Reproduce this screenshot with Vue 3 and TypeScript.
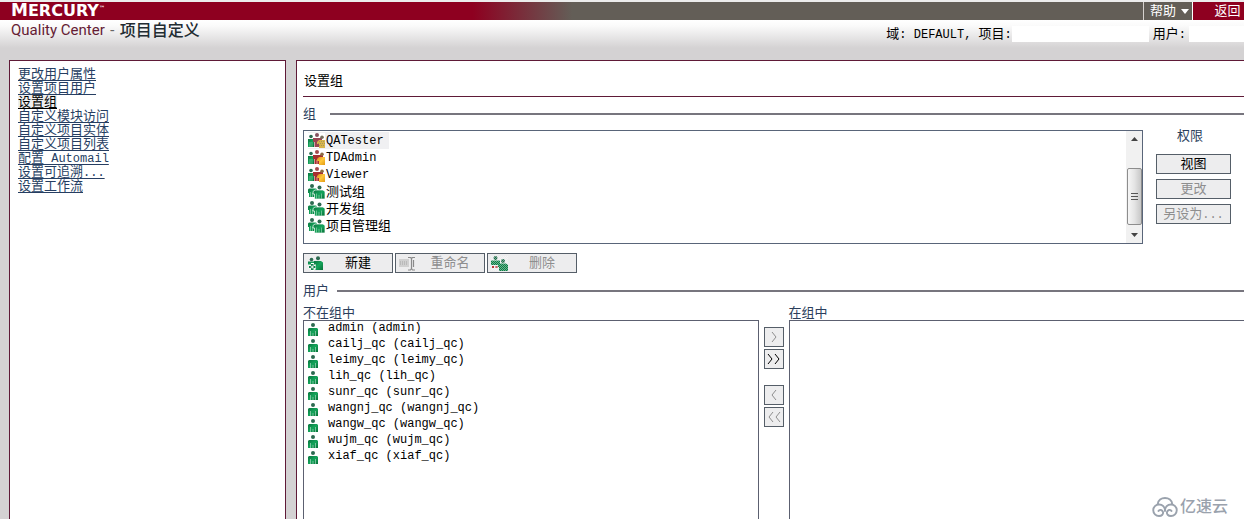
<script setup lang="ts">
import { ref } from 'vue'

interface Run { text: string; latin?: boolean }
interface NavItem { runs: Run[]; active?: boolean }
interface Group { name: string; icon: string; latin?: boolean; selected?: boolean }

const nav: NavItem[] = [
  { runs: [{ text: '更改用户属性' }] },
  { runs: [{ text: '设置项目用户' }] },
  { runs: [{ text: '设置组' }], active: true },
  { runs: [{ text: '自定义模块访问' }] },
  { runs: [{ text: '自定义项目实体' }] },
  { runs: [{ text: '自定义项目列表' }] },
  { runs: [{ text: '配置' }, { text: ' Automail', latin: true }] },
  { runs: [{ text: '设置可追溯' }, { text: '...', latin: true }] },
  { runs: [{ text: '设置工作流' }] },
]

const groups = ref<Group[]>([
  { name: 'QATester', icon: 'locked', latin: true, selected: true },
  { name: 'TDAdmin', icon: 'system', latin: true },
  { name: 'Viewer', icon: 'system', latin: true },
  { name: '测试组', icon: 'custom' },
  { name: '开发组', icon: 'custom' },
  { name: '项目管理组', icon: 'custom' },
])

const users = ['admin', 'cailj_qc', 'leimy_qc', 'lih_qc', 'sunr_qc', 'wangnj_qc', 'wangw_qc', 'wujm_qc', 'xiaf_qc']

function select(group: Group) {
  groups.value.forEach((g) => { g.selected = g === group })
}
</script>

<template>
  <div class="page">
    <svg class="defs" width="0" height="0" aria-hidden="true">
      <defs>
        <linearGradient id="green" x1="0" y1="0" x2="1" y2="1">
          <stop offset="0" stop-color="#0b7440" /><stop offset="0.5" stop-color="#14a45a" /><stop offset="1" stop-color="#087038" />
        </linearGradient>
        <linearGradient id="gold" x1="0" y1="0" x2="1" y2="1">
          <stop offset="0" stop-color="#d98a1c" /><stop offset="0.5" stop-color="#ffc83c" /><stop offset="1" stop-color="#e39a14" />
        </linearGradient>
        <pattern id="dither" width="2" height="2" patternUnits="userSpaceOnUse">
          <rect width="1" height="1" fill="#fff" /><rect x="1" y="1" width="1" height="1" fill="#fff" />
        </pattern>
      </defs>
      <symbol id="person" viewBox="0 0 12 14">
        <circle cx="6" cy="2" r="2" fill="#2c6a50" />
        <path d="M2 5h8l1 1v7H1V6z" fill="url(#green)" />
        <path d="M3.500 8v5M6 10v3M8.500 8v5" stroke="#8fd0ae" stroke-width=".8" />
      </symbol>
      <symbol id="custom" viewBox="0 0 17 15">
        <circle cx="4" cy="2" r="2" fill="#2c6a50" />
        <path d="M1 4.500h7l1 1V9H8v4H1V9H0V5.500z" fill="url(#green)" />
        <path d="M2.500 8v5M4.500 9v4" stroke="#8fd0ae" stroke-width=".7" />
        <path d="M7 6h8l2 1.500V15H6.500v-5H5V7.500z" fill="url(#green)" stroke="#fff" stroke-width=".7" />
        <circle cx="11.500" cy="3.500" r="2" fill="#2c6a50" />
        <path d="M8.500 9.500V15M11 11v4M13.500 9.500V15" stroke="#8fd0ae" stroke-width=".7" />
      </symbol>
      <symbol id="system" viewBox="0 0 17 15">
        <circle cx="3" cy="3.500" r="1.800" fill="#2c6a50" />
        <path d="M0 6h6v8H0z" fill="url(#green)" />
        <path d="M2 9v5M4 9v5" stroke="#8fd0ae" stroke-width=".6" />
        <path d="M5 5h10v4h-3v5H6.500V9H5z" fill="#a52f30" />
        <circle cx="9" cy="2" r="2" fill="#a34a4c" />
        <path d="M9 10v4" stroke="#edb5a8" stroke-width=".8" />
        <circle cx="14" cy="4.300" r="1.800" fill="#8d6b42" />
        <path d="M11 7h6v8h-6v-4H9V9z" fill="url(#gold)" />
      </symbol>
      <symbol id="locked" viewBox="0 0 17 15">
        <circle cx="3" cy="3.500" r="1.800" fill="#2c6a50" />
        <path d="M0 6h6v8H0z" fill="url(#green)" />
        <path d="M2 9v5M4 9v5" stroke="#8fd0ae" stroke-width=".6" />
        <path d="M5 5h9v4h-3v5H6.500V9H5z" fill="#9a4653" />
        <circle cx="9" cy="2" r="2" fill="#85525f" />
        <circle cx="14" cy="4.300" r="1.800" fill="#777160" />
        <path d="M11 7h6v8h-6v-4H9V9z" fill="#d8b54a" />
        <path d="M11 8.500h6M10 10.500h7M11 12.500h6" stroke="#99905e" stroke-width=".8" stroke-dasharray="1 1" />
      </symbol>
      <symbol id="add" viewBox="0 0 17 15">
        <circle cx="4.500" cy="3.500" r="1.800" fill="#2c6a50" />
        <path d="M1 5.500h7v3H1z" fill="url(#green)" />
        <circle cx="11" cy="2.200" r="2" fill="#2c6a50" />
        <path d="M7 5h7l2 1.500V14H8.500V8H7z" fill="url(#green)" />
        <path d="M4 7h3v2.500h2v3H7V15H4v-2.500H1.500v-3H4z" fill="#fff" />
        <path d="M4 8h2.500v2h2v2h-2v2H4v-2H2v-2h2z" fill="#12824b" />
        <path d="M4.700 9.500h1v1h1v1h-1v1h-1v-1h-1v-1h1z" fill="#fff" />
      </symbol>
      <symbol id="rename" viewBox="0 0 17 15">
        <path d="M0 3h10v8H0z" fill="#d0d0d0" />
        <path d="M1 6h8M1 8h8" stroke="#a4a4a4" stroke-dasharray="1 1" />
        <path d="M9 1.500h2.500l1 1 1-1H16M12.500 2.500v10M9 14h2.500l1-1.500 1 1.500H16M14.500 4v7" fill="none" stroke="#8a8a8a" stroke-width="1.200" />
      </symbol>
      <symbol id="remove" viewBox="0 0 17 15">
        <circle cx="4.500" cy="2" r="2" fill="#1d6b48" />
        <path d="M0 4.500h9V9H0z" fill="#0b7e45" />
        <circle cx="12" cy="5" r="2" fill="#1d6b48" />
        <path d="M7 7.500h8l2 1.500v6H8v-4H7z" fill="#0b7e45" />
        <path d="M0 0h17v15H0z" fill="url(#dither)" opacity=".4" />
        <path d="M1 10l2 2M3 10l-2 2M4.500 10l2 2M6.500 10l-2 2" stroke="#b73a3a" />
      </symbol>
    </svg>

    <header>
      <div class="bar">
        <div class="brand"><span class="initial">M</span>ERCURY<span class="tm">™</span></div>
        <button class="help" type="button">帮助<svg width="8" height="5" viewBox="0 0 8 5" aria-hidden="true"><path d="M0 0h8L4 5z" fill="#fff" /></svg></button>
        <button class="back" type="button">返回</button>
      </div>
      <div class="sub">
        <h1><span class="product">Quality Center</span><span class="dash">-</span><span class="section">项目自定义</span></h1>
        <div class="context">
          <span>域<i>: DEFAULT, </i>项目<i>:</i></span><span class="blank project"></span>
          <span>用户<i>:</i></span><span class="blank user"></span>
        </div>
      </div>
    </header>

    <div class="body">
      <nav>
        <a v-for="(item, n) in nav" :key="n" href="#" :class="{ active: item.active }"><span v-for="(run, r) in item.runs" :key="r" :class="{ latin: run.latin }">{{ run.text }}</span></a>
      </nav>

      <main>
        <h2>设置组</h2>
        <div class="legend">组</div>
        <div class="groups">
          <div class="listbox">
            <ul>
              <li v-for="g in groups" :key="g.name" :class="{ selected: g.selected, latin: g.latin }" @click="select(g)">
                <svg width="17" height="15" aria-hidden="true"><use :href="'#' + g.icon" /></svg><span>{{ g.name }}</span>
              </li>
            </ul>
            <div class="scroll" aria-hidden="true">
              <svg width="7" height="4" viewBox="0 0 7 4"><path d="M0 4h7L3.500 0z" fill="#444" /></svg>
              <div class="thumb"><b></b><b></b><b></b></div>
              <svg width="7" height="4" viewBox="0 0 7 4"><path d="M0 0h7L3.500 4z" fill="#444" /></svg>
            </div>
          </div>
          <div class="rights">
            <span class="caption">权限</span>
            <button type="button">视图</button>
            <button type="button" disabled>更改</button>
            <button type="button" disabled>另设为<i>...</i></button>
          </div>
        </div>
        <div class="actions">
          <button type="button"><svg width="17" height="15" aria-hidden="true"><use href="#add" /></svg><span>新建</span></button>
          <button type="button" disabled><svg width="17" height="15" aria-hidden="true"><use href="#rename" /></svg><span>重命名</span></button>
          <button type="button" disabled><svg width="17" height="15" aria-hidden="true"><use href="#remove" /></svg><span>删除</span></button>
        </div>
        <div class="legend users">用户</div>
        <div class="transfer">
          <section>
            <h3>不在组中</h3>
            <ul class="members">
              <li v-for="u in users" :key="u"><svg width="12" height="14" aria-hidden="true"><use href="#person" /></svg>{{ u }} ({{ u }})</li>
            </ul>
          </section>
          <div class="arrows">
            <button type="button" disabled aria-label="添加"><svg width="14" height="12" viewBox="0 0 14 12"><path d="M5 1l4 5-4 5" /></svg></button>
            <button type="button" aria-label="全部添加"><svg width="14" height="12" viewBox="0 0 14 12"><path d="M1 1l4 5-4 5M8 1l4 5-4 5" /></svg></button>
            <button class="apart" type="button" disabled aria-label="移除"><svg width="14" height="12" viewBox="0 0 14 12"><path d="M9 1L5 6l4 5" /></svg></button>
            <button type="button" disabled aria-label="全部移除"><svg width="14" height="12" viewBox="0 0 14 12"><path d="M6 1L2 6l4 5M13 1L9 6l4 5" /></svg></button>
          </div>
          <section>
            <h3>在组中</h3>
            <ul class="members"></ul>
          </section>
        </div>
      </main>
    </div>

    <div class="watermark">
      <svg width="26" height="20" viewBox="0 0 26 20" aria-hidden="true">
        <path d="M5.500 7.500C6 3 9.500 1 13 1s7 2 7.500 6.500M13 14C13 10 10.500 7.500 7 7.500a5.700 5.700 0 0 0 0 11.500C10 19 11.500 17 11 15s-3.500-3-4.500-1M13 14c0-4 2.500-6.500 6-6.500A5.700 5.700 0 0 1 19 19c-3 0-4.500-2-4-4s3.500-3 4.500-1" fill="none" stroke="#9aa2ad" stroke-width="1.900" stroke-linecap="round" />
      </svg>
      <span>亿速云</span>
    </div>
  </div>
</template>

<style>
body { margin: 0; }
</style>

<style scoped>
* { box-sizing: border-box; }
.page {
  position: relative;
  display: flex;
  flex-direction: column;
  height: 100vh;
  overflow: hidden;
  background: #d4d2d3;
  color: #000;
  font: 13px/14px "Liberation Sans", "Noto Sans CJK SC", sans-serif;
}
.defs { position: absolute; }
i, .latin { font-family: "Liberation Mono", "Noto Sans CJK SC", monospace; font-size: 12px; font-style: normal; }
i, nav .latin { white-space: pre; }
h1, h2, h3 { margin: 0; font-size: 13px; font-weight: 400; }
ul { margin: 0; padding: 0; list-style: none; }
button { margin: 0; padding: 0; font: inherit; color: inherit; }

.bar {
  display: flex;
  height: 20px;
  border-top: 2px solid #ececec;
  background: linear-gradient(90deg, #8e0020 38%, #635e57 46%);
  color: #fff;
}
.brand { flex: 1; padding-left: 11px; font: bold 16px/16px "DejaVu Sans", sans-serif; }
.brand .initial { font-size: 17px; }
.brand .tm { font-size: 6px; vertical-align: 6px; line-height: 6px; }
.bar button { border: 0; border-left: 1px solid #d6d2ce; background: #635e57; line-height: 18px; }
.bar .help { display: flex; align-items: center; gap: 5px; width: 49px; padding-left: 6px; }
.bar .back { width: 52px; padding-left: 18px; border-left: 1px solid #fff; background: #8e0020; }

.sub {
  display: flex;
  justify-content: space-between;
  height: 40px;
  background: linear-gradient(#fff 0, #fafafa 15%, #d4d2d3 70%);
}
h1 { display: flex; padding-left: 11px; line-height: 20px; }
.product { color: #651c34; font: 15px/20px Roboto, sans-serif; }
.dash { padding: 0 5px; color: #666; font-size: 15px; }
.section { color: #222c32; font-size: 16px; font-weight: 500; line-height: 21px; }
.context { display: flex; padding-top: 6px; line-height: 16px; white-space: pre; }
.blank { background: #fff; height: 16px; }
.project { width: 137px; margin-right: 4px; }
.user { width: 55px; margin-left: 3px; }

.body { display: flex; flex: 1; gap: 10px; min-height: 0; padding-left: 9px; }
nav, main { border: 1px solid #5f1a37; border-bottom: 0; background: #fff; }
nav { display: flex; flex-direction: column; align-items: flex-start; width: 277px; padding: 6px 8px; }
nav a { height: 14px; color: #263e62; text-decoration: underline; text-underline-offset: 2px; }
nav a.active { background: #eee; color: #000; }

main { display: flex; flex: 1; flex-direction: column; min-width: 0; padding-left: 6px; border-right: 0; }
h2 { height: 36px; padding: 13px 0 0 1px; border-bottom: 1px solid #5f1a37; }
.legend { display: flex; align-items: center; gap: 14px; height: 14px; margin: 10px 0 9px; color: #2b3e5c; }
.legend::after { content: ""; flex: 1; height: 2px; background: #77757e; }
.legend.users { gap: 8px; margin: 11px 0 8px; }

.groups { display: flex; gap: 13px; padding-right: 13px; }
.listbox { display: flex; flex: 1; height: 114px; border: 1px solid #596579; }
.listbox ul { flex: 1; padding: 1px 0 0 4px; }
.listbox li { display: flex; align-items: center; gap: 1px; width: fit-content; height: 17px; padding-right: 5px; }
.listbox li svg { background: #fff; }
.listbox li.selected { background: #f0f0f2; }
.scroll { display: flex; flex-direction: column; align-items: center; width: 16px; padding: 6px 0; background: #f1f1f1; }
.thumb {
  display: flex;
  flex-direction: column;
  align-items: center;
  justify-content: center;
  gap: 2px;
  width: 15px;
  height: 57px;
  margin: auto 0 8px;
  border: 1px solid #8d8d8d;
  border-radius: 2px;
  background: linear-gradient(90deg, #f6f6f6, #e4e4e4 50%, #c8c8c8);
}
.thumb b { width: 7px; height: 1px; background: #555; }

.rights { display: flex; flex-direction: column; align-items: center; gap: 5px; width: 75px; }
.caption { height: 19px; padding-right: 7px; color: #2b3e5c; line-height: 12px; }
.rights button, .actions button, .arrows button { border: 1px solid #555e68; background: #ededee; }
.rights button { width: 100%; height: 20px; line-height: 18px; }
button:disabled { color: #8e8e8e; }

.actions { display: flex; gap: 2px; padding-top: 9px; }
.actions button { display: flex; align-items: center; width: 90px; height: 20px; padding-left: 3px; line-height: 18px; }
.actions span { flex: 1; text-align: center; }

.transfer { display: grid; flex: 1; grid-template-columns: 1fr 20px 1fr; gap: 5px; min-height: 0; }
.transfer section { display: flex; flex-direction: column; min-width: 0; }
h3 { height: 14px; color: #2b3e5c; line-height: 14px; }
.members { flex: 1; border: 1px solid #5c6070; border-bottom: 0; font: 12px/16px "Liberation Mono", monospace; }
.transfer section:last-child .members { border-right: 0; }
.members li { display: flex; gap: 9px; height: 16px; padding-left: 3px; line-height: 14px; }
.members li svg { margin-top: 2px; }
.arrows { display: flex; flex-direction: column; gap: 2px; padding-top: 21px; }
.arrows button { display: grid; place-items: center; height: 20px; }
.arrows .apart { margin-top: 14px; }
.arrows path { fill: none; stroke: currentColor; }

.watermark { position: absolute; right: 16px; bottom: 2px; display: flex; align-items: center; gap: 2px; color: #9aa2ad; font-size: 16px; font-weight: 500; line-height: 20px; }
</style>
